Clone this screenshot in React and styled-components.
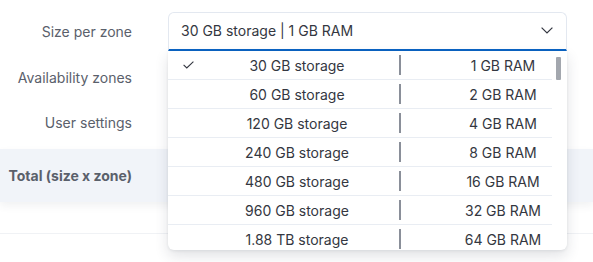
import React from "react";
import styled, { createGlobalStyle } from "styled-components";

const GlobalStyle = createGlobalStyle`
  html, body {
    margin: 0;
    padding: 0;
    background: #fff;
    font-family: Inter, "Noto Sans", "Liberation Sans", sans-serif;
    -webkit-font-smoothing: antialiased;
  }
`;

const Page = styled.div`
  position: relative;
  width: 593px;
  height: 262px;
  overflow: hidden;
  padding-top: 12px;
  box-sizing: border-box;
`;

const Fields = styled.div`
  display: flex;
  flex-direction: column;
  gap: 7px;
`;

const FieldRow = styled.div`
  display: grid;
  grid-template-columns: 132px 399px;
  column-gap: 36px;
  align-items: center;
  height: ${(p) => p.$h || 38}px;
`;

const Label = styled.div`
  text-align: right;
  font-size: 14px;
  color: #5a606b;
  font-weight: ${(p) => (p.$bold ? 700 : 400)};
`;

const SelectWrap = styled.div`
  position: relative;
  height: 39px;
`;

const SelectBox = styled.div`
  box-sizing: border-box;
  height: 39px;
  display: flex;
  align-items: center;
  justify-content: space-between;
  padding: 0 13px 1px 12px;
  border: 1px solid #e3e8f0;
  border-bottom: 2px solid #0b64c4;
  border-radius: 6px 6px 0 0;
  font-size: 14px;
  color: #343741;
  background: #fff;
`;

const Dropdown = styled.div`
  position: absolute;
  top: 39px;
  left: 0;
  width: 399px;
  height: 199px;
  display: flex;
  background: #fff;
  border-radius: 0 0 6px 6px;
  box-shadow: 0 6px 14px rgba(40, 50, 70, 0.14), 0 1px 3px rgba(40, 50, 70, 0.08);
  overflow: hidden;
  z-index: 5;
`;

const OptionList = styled.div`
  width: 384px;
  display: flex;
  flex-direction: column;
`;

const Option = styled.div`
  flex: none;
  display: grid;
  grid-template-columns: 32px 194px 12px 1fr;
  align-items: center;
  height: 28px;
  border-bottom: 1px solid #e9edf3;
  font-size: 14px;
  color: #343741;
`;

const CheckCell = styled.div`
  display: flex;
  align-items: center;
  padding-left: 15px;
`;

const Cell = styled.div`
  text-align: center;
  padding-left: ${(p) => p.$pad || 0}px;
  white-space: nowrap;
`;

const Bar = styled.div`
  justify-self: center;
  width: 2px;
  height: 20px;
  background: #8a8f99;
`;

const ScrollTrack = styled.div`
  flex: 1;
  display: flex;
  justify-content: center;
  padding-top: 6px;
  padding-right: 2px;
`;

const Thumb = styled.div`
  width: 5px;
  height: 23px;
  background: #a3a7ae;
  border-radius: 1px;
`;

const TotalBand = styled.div`
  margin-top: 8px;
  height: 53px;
  background: #f1f4f9;
  box-shadow: 0 4px 8px rgba(60, 70, 90, 0.07);
  display: grid;
  grid-template-columns: 132px 1fr;
  align-items: center;
`;

const Rule = styled.div`
  margin-top: 31px;
  border-top: 1px solid #f0f2f5;
`;

const options = [
  ["30 GB storage", "1 GB RAM"],
  ["60 GB storage", "2 GB RAM"],
  ["120 GB storage", "4 GB RAM"],
  ["240 GB storage", "8 GB RAM"],
  ["480 GB storage", "16 GB RAM"],
  ["960 GB storage", "32 GB RAM"],
  ["1.88 TB storage", "64 GB RAM"],
];

function Check() {
  return (
    <svg width="11" height="8" viewBox="0 0 11 8">
      <path d="M0.6 3.8 L3.8 7 L10.4 0.6" fill="none" stroke="#343741" strokeWidth="1.1" />
    </svg>
  );
}

function Chevron() {
  return (
    <svg width="12" height="7" viewBox="0 0 12 7">
      <path d="M0.6 0.6 L6 6 L11.4 0.6" fill="none" stroke="#343741" strokeWidth="1.2" />
    </svg>
  );
}

export default function App() {
  return (
    <Page>
      <GlobalStyle />
      <Fields>
        <FieldRow $h={39}>
          <Label>Size per zone</Label>
          <SelectWrap>
            <SelectBox>
              <span>30 GB storage | 1 GB RAM</span>
              <Chevron />
            </SelectBox>
            <Dropdown>
              <OptionList>
                {options.map(([storage, ram], i) => (
                  <Option key={storage}>
                    <CheckCell>{i === 0 && <Check />}</CheckCell>
                    <Cell>{storage}</Cell>
                    <Bar />
                    <Cell $pad={48}>{ram}</Cell>
                  </Option>
                ))}
              </OptionList>
              <ScrollTrack>
                <Thumb />
              </ScrollTrack>
            </Dropdown>
          </SelectWrap>
        </FieldRow>
        <FieldRow>
          <Label>Availability zones</Label>
          <div />
        </FieldRow>
        <FieldRow>
          <Label>User settings</Label>
          <div />
        </FieldRow>
      </Fields>
      <TotalBand>
        <Label $bold>Total (size x zone)</Label>
      </TotalBand>
      <Rule />
    </Page>
  );
}
